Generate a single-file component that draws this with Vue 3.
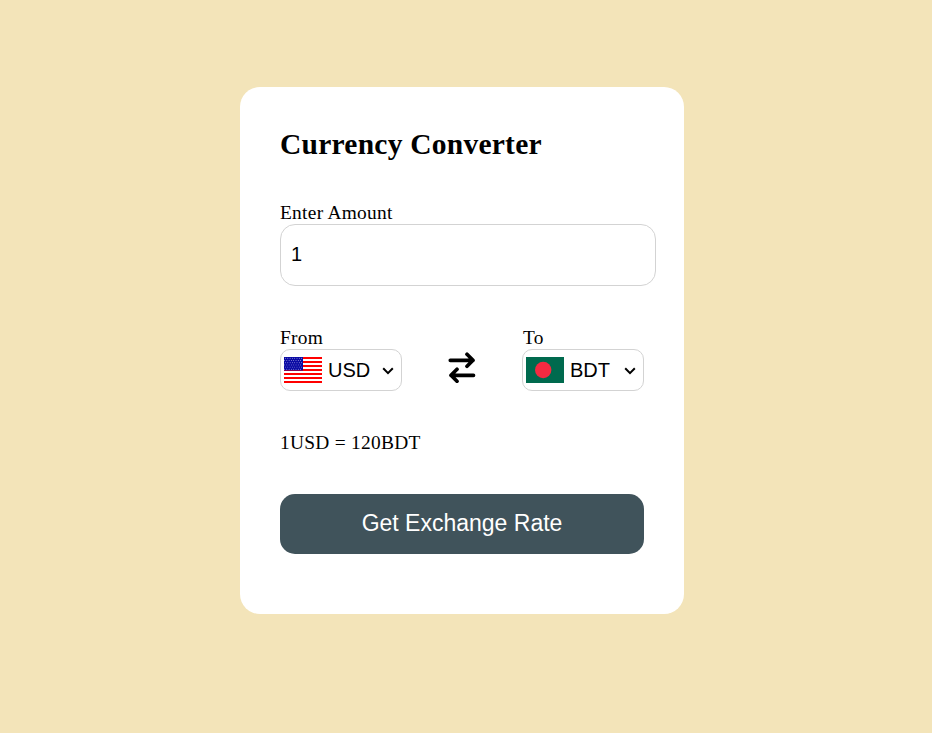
<script setup>
import { ref } from 'vue'

const amount = ref('1')
const from = ref('USD')
const to = ref('BDT')
const rate = 120

function swap() {
  const previous = from.value
  from.value = to.value
  to.value = previous
}
</script>

<template>
  <main class="page">
    <form class="card" @submit.prevent>
      <h2 class="title">Currency Converter</h2>

      <div class="amount">
        <label for="amount">Enter Amount</label>
        <input id="amount" v-model="amount" type="text" />
      </div>

      <div class="pair">
        <div class="side">
          <p class="label">From</p>
          <div class="select">
            <svg class="flag" viewBox="0 0 38 26">
              <rect width="38" height="26" fill="#fff" />
              <rect v-for="n in 7" :key="n" y="0" width="38" height="2" :transform="`translate(0 ${(n - 1) * 4})`" fill="#f00" />
              <rect width="19" height="13.5" fill="#0a0aa4" />
              <g fill="#d8d8f4">
                <template v-for="r in 6" :key="r">
                  <circle v-for="c in 8" :key="c" :cx="c * 2.3 - (r % 2 ? 0.8 : 1.8)" :cy="r * 2.2 - 0.9" r="0.45" />
                </template>
              </g>
            </svg>
            <span class="code">{{ from }}</span>
            <svg class="chevron" viewBox="0 0 12 8"><path d="M1.2 1.3 6 6.1l4.8-4.8" /></svg>
          </div>
        </div>

        <svg class="swap" viewBox="0 0 28 32" @click="swap">
          <path d="M2.3 9.3H25M19 3.3l6 6-6 6M25.5 24.3H3M9 18.3l-6 6 6 6" />
        </svg>

        <div class="side">
          <p class="label to">To</p>
          <div class="select">
            <svg class="flag" viewBox="0 0 38 26">
              <rect width="38" height="26" fill="#006a4e" />
              <circle cx="17.2" cy="13" r="8.2" fill="#f42a41" />
            </svg>
            <span class="code">{{ to }}</span>
            <svg class="chevron" viewBox="0 0 12 8"><path d="M1.2 1.3 6 6.1l4.8-4.8" /></svg>
          </div>
        </div>
      </div>

      <p class="result">1{{ from }} = {{ rate }}{{ to }}</p>
      <button class="submit">Get Exchange Rate</button>
    </form>
  </main>
</template>

<style>
body {
  margin: 0;
  background: #f3e4b9;
}
</style>

<style scoped>
.page {
  display: flex;
  justify-content: center;
  box-sizing: border-box;
  min-height: 733px;
  padding: 87px 8px 0 0;
  font: 19.4px/23px 'Liberation Serif', 'Times New Roman', serif;
  letter-spacing: 0.28px;
  color: #000;
}
.card {
  box-sizing: border-box;
  width: 444px;
  height: 527px;
  padding: 40px;
  border-radius: 20px;
  background: #fff;
}
.title {
  margin: 0;
  font-size: 29.5px;
  line-height: 34px;
  letter-spacing: 0.24px;
}
.amount {
  margin-top: 40px;
}
.amount label {
  display: block;
}
.amount input {
  display: block;
  box-sizing: border-box;
  width: 376px;
  height: 62px;
  padding: 0 10px 2px;
  border: 1px solid lightgray;
  border-radius: 15px;
  outline: none;
  background: #fff;
  color: #000;
  font: 20px 'Liberation Sans', Arial, sans-serif;
}
.pair {
  display: flex;
  justify-content: space-between;
  margin-top: 40px;
}
.label {
  margin: 0;
}
.label.to {
  padding-left: 1px;
}
.select {
  display: flex;
  align-items: center;
  box-sizing: border-box;
  width: 122px;
  height: 42px;
  padding: 0 7px 0 3px;
  border: 1px solid lightgray;
  border-radius: 10px;
}
.flag {
  flex: none;
  width: 38px;
  height: 26px;
}
.code {
  flex: 1;
  padding-left: 6px;
  font: 20px/23px 'Liberation Sans', Arial, sans-serif;
  letter-spacing: 0;
}
.chevron {
  width: 12px;
  height: 8px;
  margin-top: 2px;
  fill: none;
  stroke: #000;
  stroke-width: 2;
}
.swap {
  width: 28px;
  height: 32px;
  margin-top: 25px;
  fill: none;
  stroke: #000;
  stroke-width: 3.7;
  stroke-linecap: round;
  stroke-linejoin: round;
  cursor: pointer;
}
.result {
  margin: 40px 0;
}
.submit {
  display: block;
  width: 100%;
  height: 60px;
  padding: 0 0 2px;
  border: 0;
  border-radius: 15px;
  background: #40535b;
  color: #fff;
  font: 23px 'Liberation Sans', Arial, sans-serif;
}
</style>
